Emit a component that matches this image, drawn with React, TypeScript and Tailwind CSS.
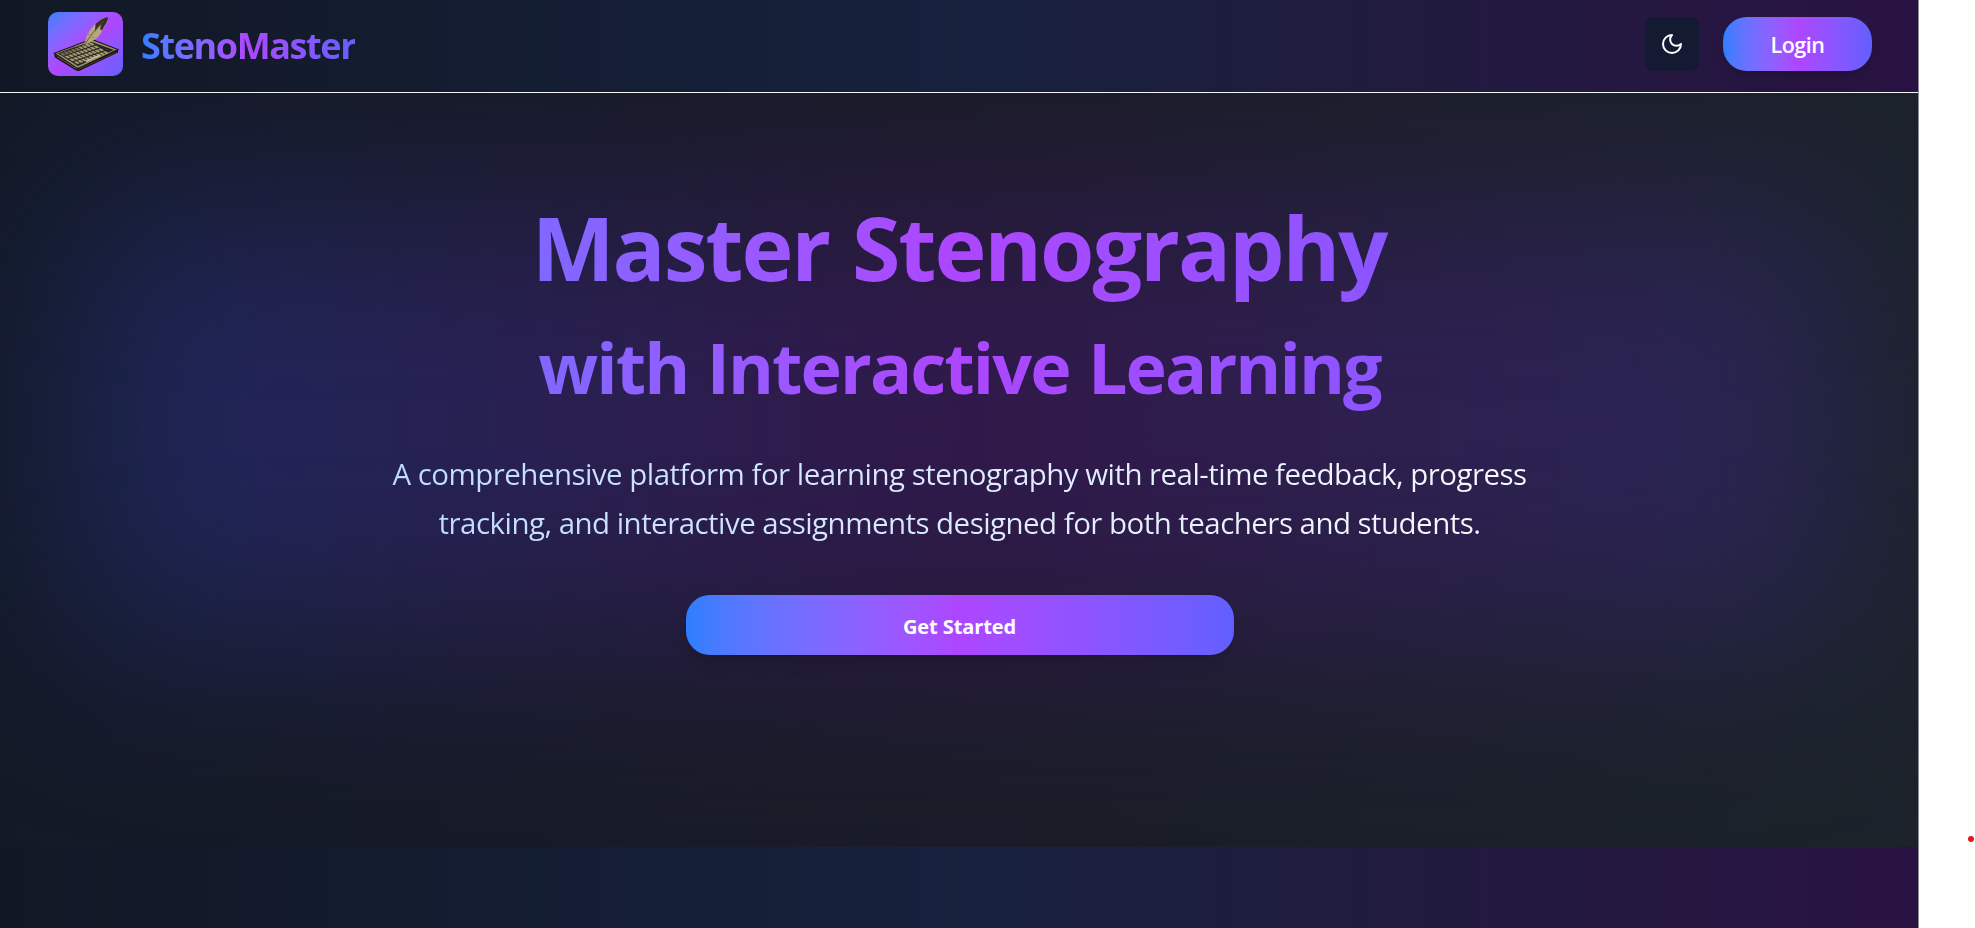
function QuillKeyboard() {
  const rows = [0, 1, 2, 3];
  const cols = [0, 1, 2, 3, 4, 5, 6, 7, 8];
  return (
    <svg viewBox="0 0 75 64" className="h-full w-full">
      <path d="M6 42 L30 55.5 L31 59 L28 58.5 L7 45.5Z" fill="#14120f" />
      <path d="M30 55.5 L70 37.5 L70 40.5 L31 59Z" fill="#0f0d0b" />
      <path d="M6.3 41.3 L40 28.5 Q44 27 48 29 L70 37.5 L31 56 Q29.5 56.5 28 55.5Z" fill="#9b916e" stroke="#1d1a14" strokeWidth="1.1" />
      <path d="M10 41.6 L42.5 29.6 L66 38 L30 54Z" fill="#2b261d" />
      <g transform="matrix(0.34 -0.118 0.213 0.128 11 41.4)" fill="#a39a76">
        {rows.map((r) =>
          cols.map((c) => <rect key={`${r}-${c}`} x={c * 10.6 + 1} y={r * 22 + 2} width="8" height="16.5" rx="2" />),
        )}
      </g>
      <path d="M8 41.5 L26 34.5 L34 36 L16 43.5Z" fill="#1b1712" opacity="0.35" />
      <path d="M38 49.5 L52 43.4" stroke="#cabf94" strokeWidth="1.7" />
      <path d="M9 44.6 L29 57" stroke="#9c9270" strokeWidth="0.6" />
      <path d="M31 57.2 L69 40" stroke="#7d7458" strokeWidth="0.5" />
      <path d="M37 31 C38 23 43 14 53 7.5 C56 5.5 59 4.5 60 5.5 C60.5 9 57 14 54 19 C51 26 45 29 38 32.5 L35.5 35Z" fill="#b5a67d" />
      <path d="M47.5 12 C53 7 59 4.3 60 5.5 C60.3 9 56.5 13.5 54 18.5 C52 17.5 51.5 16 53.5 12.5 C51 14.5 49 16.5 47 19.5Z" fill="#382e25" />
      <path d="M34.5 37.5 C38 30 45 19 56 9" stroke="#5b4d38" strokeWidth="0.8" fill="none" />
      <path d="M40 22 L43 23 M38.5 27 L40.5 28 M46 26 L43.5 25" stroke="#857756" strokeWidth="0.6" />
    </svg>
  );
}

function MoonIcon() {
  return (
    <svg viewBox="0 0 24 24" className="size-6 fill-none stroke-white stroke-2" strokeLinecap="round" strokeLinejoin="round">
      <path d="M12 3a6 6 0 0 0 9 9 9 9 0 1 1-9-9Z" />
    </svg>
  );
}

function Header() {
  return (
    <header className="flex h-[93px] shrink-0 items-start justify-between border-b border-[#f3f4f6] pr-[46px] pl-12">
      <div className="flex pt-3">
        <div className="h-16 w-[75px] overflow-hidden rounded-[10px] bg-linear-to-br from-blue-500 via-purple-500 to-indigo-500">
          <QuillKeyboard />
        </div>
        <span className="mt-[10px] ml-[18px] bg-linear-to-r from-blue-500 via-purple-500 to-indigo-500 bg-clip-text text-4xl leading-[48px] font-bold tracking-[-1.4px] text-transparent">
          StenoMaster
        </span>
      </div>
      <div className="flex gap-6 pt-[17px]">
        <button className="flex size-[54px] items-center justify-center rounded-[8px] bg-[#151a33]">
          <MoonIcon />
        </button>
        <button className="h-[54px] w-[149px] rounded-[24px] bg-linear-to-r from-blue-500 via-purple-500 to-indigo-500 pt-px text-[21.5px] leading-none font-[620] tracking-[-0.5px] text-white shadow-lg">
          Login
        </button>
      </div>
    </header>
  );
}

function Hero() {
  return (
    <section className="relative h-[754px] shrink-0 overflow-hidden bg-linear-[100deg] from-[#121926] via-[#1a1c28] to-[#1c232a]">
      <div className="absolute inset-x-[75px] top-[115px] bottom-[205px] bg-linear-to-r from-[#1d2960] via-[#33184e] to-[#2a275a] opacity-90 blur-[95px]" />
      <div className="relative mx-auto flex w-[1760px] flex-col items-center pt-[99px] pl-px">
        <h1 className="w-full bg-linear-to-r from-blue-500 via-purple-500 to-indigo-500 bg-clip-text text-center font-bold text-transparent">
          <span className="block pr-px text-[88px] leading-[110px] tracking-[-2.1px] [word-spacing:2px]">Master Stenography</span>
          <span className="mt-[21px] block text-[70px] leading-[88px] tracking-[-1.9px] [word-spacing:2px]">with Interactive Learning</span>
        </h1>
        <p className="mt-[39px] w-[1150px] bg-linear-to-r from-blue-200 to-gray-50 bg-clip-text text-center text-[29.5px] leading-[48.75px] font-[370] tracking-[-0.54px] whitespace-nowrap text-transparent">
          A comprehensive platform for learning stenography with real-time feedback, progress
          <br />
          tracking, and interactive assignments designed for both teachers and students.
        </p>
        <button className="mt-[47.5px] h-[60px] w-[548px] rounded-[24px] bg-linear-to-r from-blue-500 via-purple-500 to-indigo-500 pt-[3px] text-xl font-bold tracking-[-0.1px] text-white shadow-lg">
          Get Started
        </button>
      </div>
    </section>
  );
}

export default function App() {
  return (
    <div className="flex h-[928px] w-full overflow-hidden bg-white font-['Open_Sans',sans-serif]">
      <main className="flex w-[1919px] shrink-0 flex-col border-r border-[#8b8b93] bg-linear-to-r from-[#111825] via-[#16213d] to-[#291242]">
        <Header />
        <Hero />
      </main>
      <aside className="flex flex-1 items-start justify-end pt-[836px] pr-px">
        <span className="size-1.5 rounded-full bg-[#e81717]" />
      </aside>
    </div>
  );
}
